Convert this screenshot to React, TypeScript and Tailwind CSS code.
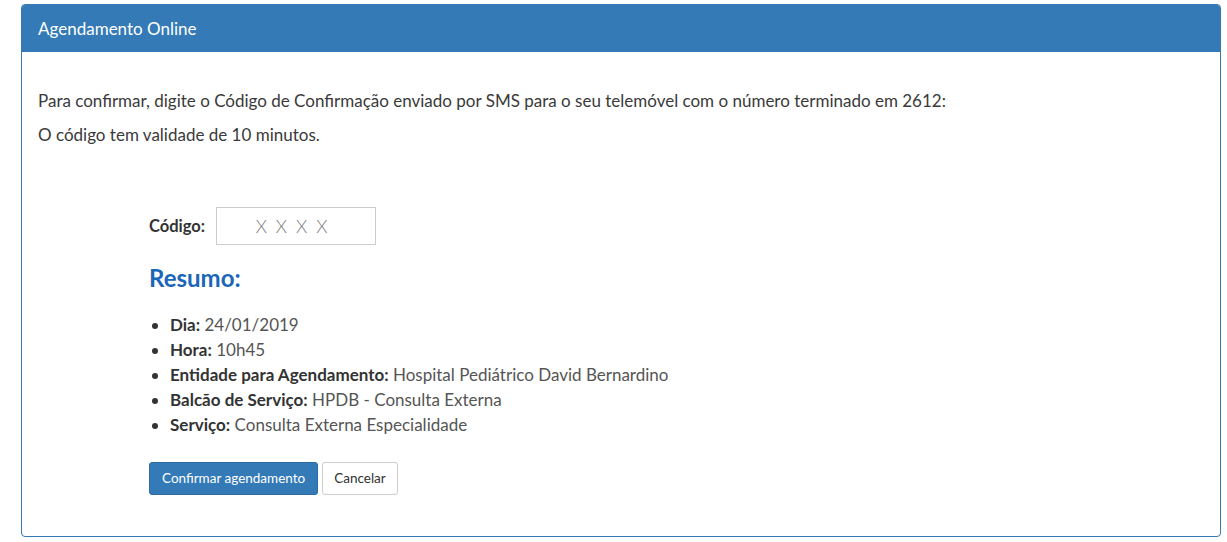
import React from 'react';

const summary = [
  { label: 'Dia:', value: '24/01/2019' },
  { label: 'Hora:', value: '10h45' },
  { label: 'Entidade para Agendamento:', value: 'Hospital Pediátrico David Bernardino' },
  { label: 'Balcão de Serviço:', value: 'HPDB - Consulta Externa' },
  { label: 'Serviço:', value: 'Consulta Externa Especialidade' },
];

const App: React.FC = () => {
  return (
    <div className="min-h-[542px] bg-white pt-[4px] pl-[21px] pr-[6px] font-['Lato',sans-serif] text-[#3a3a3a]">
      <div className="h-[533px] border border-[#337ab7] rounded-[4px] overflow-hidden flex flex-col">
        <div className="h-[47px] bg-[#337ab7] text-white text-[17px] flex items-center px-4">
          Agendamento Online
        </div>

        <div className="px-4 pt-[32px] text-[17px]">
          <p className="leading-[34px]">
            Para confirmar, digite o Código de Confirmação enviado por SMS para o seu telemóvel com o número terminado em 2612:
          </p>
          <p className="leading-[34px]">O código tem validade de 10 minutos.</p>

          <div className="pl-[111px] pt-[55px]">
            <div className="flex items-center gap-[11px]">
              <label className="font-bold text-[16.5px] text-[#333]">Código:</label>
              <input
                className="w-[160px] h-[38px] border border-[#ccc] text-center text-[18px] font-light tracking-[9px] placeholder:text-[#7a7a7a] outline-none"
                placeholder="XXXX"
              />
            </div>

            <h3 className="mt-[15px] text-[24px] font-bold text-[#1a66b8]">Resumo:</h3>

            <ul className="mt-[16px] list-disc pl-[21px] leading-[25px] marker:text-[#333]">
              {summary.map((s) => (
                <li key={s.label}>
                  <span className="font-bold text-[#333]">{s.label}</span>{' '}
                  <span className="text-[#555]">{s.value}</span>
                </li>
              ))}
            </ul>

            <div className="mt-[25px] flex gap-[4px]">
              <button className="h-[33px] px-3 rounded-[3px] bg-[#337ab7] border border-[#2e6da4] text-white text-[13.5px]">
                Confirmar agendamento
              </button>
              <button className="h-[33px] px-[11px] rounded-[3px] bg-white border border-[#ccc] text-[#333] text-[13.5px]">
                Cancelar
              </button>
            </div>
          </div>
        </div>
      </div>
    </div>
  );
};

export default App;
